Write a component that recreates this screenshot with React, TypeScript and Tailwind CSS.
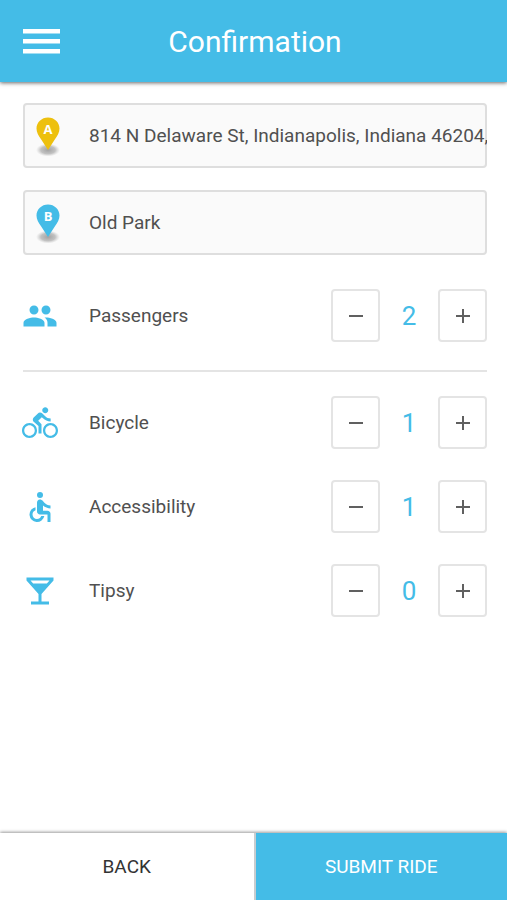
import { useState } from "react";
import type { IconType } from "react-icons";
import {
  MdAccessible,
  MdAdd,
  MdDirectionsBike,
  MdLocalBar,
  MdPeople,
  MdRemove,
} from "react-icons/md";

function Pin({ letter, color }: { letter: string; color: string }) {
  return (
    <svg className="h-10 w-6 shrink-0" viewBox="0 0 24 40" aria-hidden="true">
      <defs>
        <radialGradient id={`shade-${letter}`}>
          <stop offset="0" stopColor="#8c8c8c" stopOpacity="0.8" />
          <stop offset="0.6" stopColor="#9c9c9c" stopOpacity="0.6" />
          <stop offset="1" stopColor="#bbbbbb" stopOpacity="0" />
        </radialGradient>
      </defs>
      <ellipse cx="12" cy="34" rx="12" ry="6.500" fill={`url(#shade-${letter})`} />
      <path
        d="M12 1.500C5.600 1.500.5 6.400.5 12.600c0 4 2 7 4.400 10.400L12 34l7.100-11c2.400-3.400 4.400-6.400 4.400-10.400C23.500 6.400 18.400 1.500 12 1.500z"
        fill={color}
      />
      <text
        x="12"
        y="18"
        textAnchor="middle"
        fill="#ffffff"
        className="font-['Open_Sans',sans-serif] text-[13px] font-bold"
      >
        {letter}
      </text>
    </svg>
  );
}

function PlaceField({
  label,
  value,
  letter,
  color,
}: {
  label: string;
  value: string;
  letter: string;
  color: string;
}) {
  return (
    <label className="flex h-[65px] items-center gap-[29px] rounded-sm border-2 border-[#dedede] bg-[#fafafa] pl-[11px]">
      <Pin letter={letter} color={color} />
      <input
        type="text"
        readOnly
        aria-label={label}
        defaultValue={value}
        className="-mr-0.5 min-w-0 flex-1 bg-transparent text-[19px] leading-7 text-[#505050] outline-none"
      />
    </label>
  );
}

const stepButton =
  "flex h-[53px] w-[49px] items-center justify-center rounded-sm border-2 border-[#e4e4e4] bg-white text-2xl text-[#606060]";

function CounterRow({
  label,
  icon: Icon,
  initial,
}: {
  label: string;
  icon: IconType;
  initial: number;
}) {
  const [count, setCount] = useState(initial);
  return (
    <div className="flex items-center">
      <Icon className="-ml-px size-9 shrink-0 text-[#44bce7]" aria-hidden="true" />
      <span className="flex-1 pl-[31px] text-[19px] leading-7 text-[#505050]">{label}</span>
      <button
        type="button"
        aria-label={`Fewer: ${label}`}
        className={stepButton}
        onClick={() => setCount(Math.max(0, count - 1))}
      >
        <MdRemove />
      </button>
      <output
        aria-label={label}
        className="w-[58px] text-center text-[26px] leading-8 text-[#44bce7]"
      >
        {count}
      </output>
      <button
        type="button"
        aria-label={`More: ${label}`}
        className={stepButton}
        onClick={() => setCount(count + 1)}
      >
        <MdAdd />
      </button>
    </div>
  );
}

export default function App() {
  return (
    <div className="flex min-h-screen flex-col bg-white font-[Roboto,sans-serif]">
      <header className="grid h-[82px] grid-cols-[1fr_auto_1fr] items-center bg-[#44bce7] pl-[23px] pr-5 shadow-[0_1px_4px_rgba(0,0,0,0.6)]">
        <button type="button" aria-label="Menu" className="w-[37px]">
          <svg className="h-[25px] w-[37px]" viewBox="0 0 37 25" fill="#ffffff">
            <rect width="37" height="4.500" />
            <rect y="10" width="37" height="4.500" />
            <rect y="20" width="37" height="4.500" />
          </svg>
        </button>
        <h1 className="pt-0.5 text-[30px] leading-9 text-white">Confirmation</h1>
      </header>

      <main className="flex flex-1 flex-col pb-8 pl-[23px] pr-5 pt-[21px]">
        <div className="flex flex-col gap-[22px]">
          <PlaceField
            label="Pickup"
            value="814 N Delaware St, Indianapolis, Indiana 46204,"
            letter="A"
            color="#edc00e"
          />
          <PlaceField label="Drop-off" value="Old Park" letter="B" color="#44bce7" />
        </div>
        <div className="mt-[34px]">
          <CounterRow label="Passengers" icon={MdPeople} initial={2} />
        </div>
        <hr className="mb-6 mt-7 border-t-2 border-[#e4e4e4]" />
        <div className="flex flex-col gap-[31px]">
          <CounterRow label="Bicycle" icon={MdDirectionsBike} initial={1} />
          <CounterRow label="Accessibility" icon={MdAccessible} initial={1} />
          <CounterRow label="Tipsy" icon={MdLocalBar} initial={0} />
        </div>
      </main>

      <footer className="grid h-[67px] grid-cols-2 shadow-[0_-1px_3px_rgba(0,0,0,0.4)]">
        <button type="button" className="bg-white text-[19px] leading-7 text-[#333333]">
          BACK
        </button>
        <button
          type="button"
          className="border-l-2 border-[#c8cdd0] bg-[#44bce7] text-[19px] leading-7 text-white"
        >
          SUBMIT RIDE
        </button>
      </footer>
    </div>
  );
}
